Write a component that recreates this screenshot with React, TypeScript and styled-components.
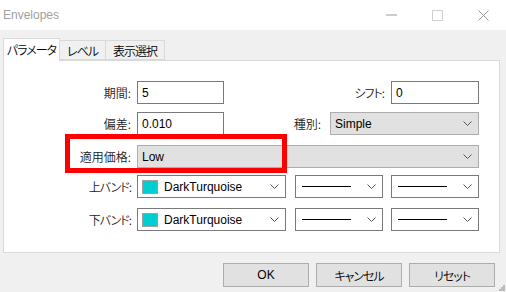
import React from 'react';
import styled, { createGlobalStyle } from 'styled-components';

const GlobalStyle = createGlobalStyle`
	html, body {
		margin: 0;
		padding: 0;
		background: #f0f0f0;
	}
	body {
		font-family: "Liberation Sans", "Noto Sans CJK JP", sans-serif;
		font-size: 12px;
		color: #000;
		font-feature-settings: "palt";
	}
`;

const jp = `"Noto Sans CJK JP", sans-serif`;

const Window = styled.div`
	width: 506px;
	height: 292px;
	display: flex;
	flex-direction: column;
	background: #f0f0f0;
	position: relative;
	overflow: hidden;
`;

const TitleBar = styled.div`
	height: 30px;
	background: #fff;
	display: flex;
	align-items: center;
	padding-left: 3px;
	color: #a0a0a0;
	font-size: 12px;
`;

const TitleText = styled.span`
	flex: 1;
	margin-top: -1px;
`;

const WinButton = styled.div`
	width: 46px;
	height: 30px;
	display: flex;
	align-items: center;
	justify-content: center;
`;

const Body = styled.div`
	flex: 1;
	padding: 8px 7px 0 3px;
	display: flex;
	flex-direction: column;
`;

const TabStrip = styled.div`
	display: flex;
	align-items: flex-end;
	height: 22px;
	position: relative;
	z-index: 1;
`;

const Tab = styled.div<{ $active?: boolean; $w: number }>`
	box-sizing: border-box;
	width: ${(p) => p.$w}px;
	height: ${(p) => (p.$active ? 23 : 20)}px;
	margin-bottom: ${(p) => (p.$active ? -1 : 0)}px;
	border: 1px solid #d9d9d9;
	border-bottom: ${(p) => (p.$active ? 'none' : '1px solid #d9d9d9')};
	border-left: ${(p) => (p.$active ? '1px solid #d9d9d9' : 'none')};
	background: ${(p) => (p.$active ? '#fff' : '#f0f0f0')};
	display: flex;
	align-items: center;
	justify-content: center;
	font-family: ${jp};
	font-weight: 350;
	font-size: 12px;
	letter-spacing: -1px;
	white-space: nowrap;
	padding-bottom: ${(p) => (p.$active ? 2 : 0)}px;
`;

const Panel = styled.div`
	box-sizing: border-box;
	width: 497px;
	height: 193px;
	background: #fff;
	border: 1px solid #d9d9d9;
	position: relative;
	padding-top: 20px;
	display: flex;
	flex-direction: column;
`;

const Row = styled.div<{ $mt?: number }>`
	display: flex;
	align-items: center;
	height: 23px;
	margin-top: ${(p) => p.$mt ?? 0}px;
`;

const Label = styled.div<{ $w: number; $gap?: number; $tight?: boolean }>`
	width: ${(p) => p.$w}px;
	margin-right: ${(p) => p.$gap ?? 6}px;
	text-align: right;
	font-family: ${jp};
	font-weight: 350;
	font-size: 12px;
	letter-spacing: ${(p) => (p.$tight ? '-1px' : '0')};
	white-space: nowrap;
	color: #1a1a1a;
`;

const TextBox = styled.div<{ $w: number }>`
	box-sizing: border-box;
	width: ${(p) => p.$w}px;
	height: 23px;
	border: 1px solid #7a7a7a;
	background: #fff;
	display: flex;
	align-items: center;
	padding-left: 4px;
	font-size: 12px;
`;

const Combo = styled.div<{ $w: number; $gray?: boolean; $ml?: number }>`
	box-sizing: border-box;
	width: ${(p) => p.$w}px;
	height: 23px;
	margin-left: ${(p) => p.$ml ?? 0}px;
	border: 1px solid ${(p) => (p.$gray ? '#adadad' : '#7a7a7a')};
	background: ${(p) => (p.$gray ? '#e1e1e1' : '#fff')};
	display: flex;
	align-items: center;
	padding: 0 6px 0 4px;
	font-size: 12px;
	gap: 6px;
`;

const ComboValue = styled.span`
	flex: 1;
	white-space: nowrap;
`;

const Swatch = styled.span`
	box-sizing: border-box;
	width: 16px;
	height: 14px;
	background: #00ced1;
	border: 1px solid #a0a0a0;
	flex: none;
`;

const LineSample = styled.span`
	flex: 1;
	height: 1px;
	background: #000;
	margin: 0 10px 0 2px;
`;

const Highlight = styled.div`
	position: absolute;
	left: 61px;
	top: 73px;
	width: 222px;
	height: 39px;
	box-sizing: border-box;
	border: 5px solid #ff0000;
	pointer-events: none;
`;

const ButtonBar = styled.div`
	display: flex;
	justify-content: flex-end;
	gap: 7px;
	margin-top: 10px;
	padding-right: 4px;
`;

const Button = styled.button<{ $jp?: boolean }>`
	box-sizing: border-box;
	width: 86px;
	height: 24px;
	border: 1px solid #adadad;
	background: #e1e1e1;
	font-family: ${(p) => (p.$jp ? jp : `"Liberation Sans", sans-serif`)};
	font-weight: ${(p) => (p.$jp ? 350 : 400)};
	letter-spacing: ${(p) => (p.$jp ? '-1px' : '0')};
	font-feature-settings: "palt";
	font-size: 12px;
	color: #000;
	padding: 0;
`;

const Grip = styled.svg`
	position: absolute;
	right: 1px;
	bottom: 1px;
`;

const Chevron = () => (
	<svg width="9" height="5" viewBox="0 0 9 5" style={{ flex: 'none' }}>
		<path d="M0.5 0.5 L4.5 4.5 L8.5 0.5" fill="none" stroke="#555" strokeWidth="1" />
	</svg>
);

const App = () => {
	return (
		<>
			<GlobalStyle />
			<Window>
				<TitleBar>
					<TitleText>Envelopes</TitleText>
					<WinButton>
						<svg width="11" height="2">
							<rect x="0" y="0.5" width="11" height="1" fill="#9a9a9a" />
						</svg>
					</WinButton>
					<WinButton>
						<svg width="11" height="11">
							<rect x="0.5" y="0.5" width="10" height="10" fill="none" stroke="#d0d0d0" />
						</svg>
					</WinButton>
					<WinButton>
						<svg width="11" height="11">
							<path d="M0.5 0.5 L10.5 10.5 M10.5 0.5 L0.5 10.5" stroke="#999" strokeWidth="1" />
						</svg>
					</WinButton>
				</TitleBar>
				<Body>
					<TabStrip>
						<Tab $active $w={57}>パラメータ</Tab>
						<Tab $w={46}>レベル</Tab>
						<Tab $w={59}>表示選択</Tab>
					</TabStrip>
					<Panel>
						<Row>
							<Label $w={127}>期間:</Label>
							<TextBox $w={87}>5</TextBox>
							<Label $w={160} $gap={7} $tight>シフト:</Label>
							<TextBox $w={88}>0</TextBox>
						</Row>
						<Row $mt={8}>
							<Label $w={127}>偏差:</Label>
							<TextBox $w={87}>0.010</TextBox>
							<Label $w={97} $gap={9}>種別:</Label>
							<Combo $w={149} $gray>
								<ComboValue>Simple</ComboValue>
								<Chevron />
							</Combo>
						</Row>
						<Row $mt={10}>
							<Label $w={127}>適用価格:</Label>
							<Combo $w={342} $gray>
								<ComboValue>Low</ComboValue>
								<Chevron />
							</Combo>
						</Row>
						<Row $mt={7}>
							<Label $w={127} $tight>上バンド:</Label>
							<Combo $w={149}>
								<Swatch />
								<ComboValue>DarkTurquoise</ComboValue>
								<Chevron />
							</Combo>
							<Combo $w={88} $ml={9}>
								<LineSample />
								<Chevron />
							</Combo>
							<Combo $w={88} $ml={8}>
								<LineSample />
								<Chevron />
							</Combo>
						</Row>
						<Row $mt={10}>
							<Label $w={127} $tight>下バンド:</Label>
							<Combo $w={149}>
								<Swatch />
								<ComboValue>DarkTurquoise</ComboValue>
								<Chevron />
							</Combo>
							<Combo $w={88} $ml={9}>
								<LineSample />
								<Chevron />
							</Combo>
							<Combo $w={88} $ml={8}>
								<LineSample />
								<Chevron />
							</Combo>
						</Row>
						<Highlight />
					</Panel>
					<ButtonBar>
						<Button>OK</Button>
						<Button $jp>キャンセル</Button>
						<Button $jp>リセット</Button>
					</ButtonBar>
				</Body>
				<Grip width="6" height="6" viewBox="0 0 6 6">
					<rect x="4" y="0" width="2" height="2" fill="#bbb" />
					<rect x="2" y="2" width="2" height="2" fill="#bbb" />
					<rect x="4" y="2" width="2" height="2" fill="#bbb" />
					<rect x="0" y="4" width="2" height="2" fill="#bbb" />
					<rect x="2" y="4" width="2" height="2" fill="#bbb" />
					<rect x="4" y="4" width="2" height="2" fill="#bbb" />
				</Grip>
			</Window>
		</>
	);
};

export default App;
